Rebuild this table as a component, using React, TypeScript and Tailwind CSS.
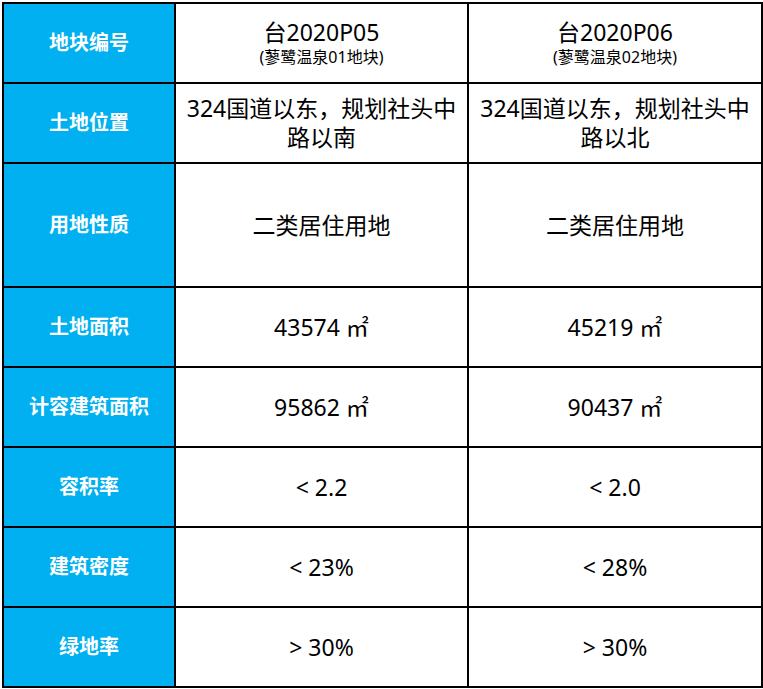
import React from 'react';

const rows: { label: string; a: React.ReactNode; b: React.ReactNode; h: string }[] = [
  { label: '土地位置', a: '324国道以东，规划社头中路以南', b: '324国道以东，规划社头中路以北', h: 'h-[80px]' },
  { label: '用地性质', a: '二类居住用地', b: '二类居住用地', h: 'h-[124px]' },
  { label: '土地面积', a: '43574 ㎡', b: '45219 ㎡', h: 'h-[80px]' },
  { label: '计容建筑面积', a: '95862 ㎡', b: '90437 ㎡', h: 'h-[80px]' },
  { label: '容积率', a: '< 2.2', b: '< 2.0', h: 'h-[80px]' },
  { label: '建筑密度', a: '< 23%', b: '< 28%', h: 'h-[80px]' },
  { label: '绿地率', a: '> 30%', b: '> 30%', h: 'h-[80px]' },
];

export default function App() {
  return (
    <div className="w-[763px] h-[689px] bg-white pl-[2px] pt-[2px] font-['Noto_Sans','Noto_Sans_CJK_SC',sans-serif] text-black">
      <table className="table-fixed border-collapse w-[759px]">
        <colgroup>
          <col className="w-[172px]" />
          <col className="w-[293px]" />
          <col className="w-[294px]" />
        </colgroup>
        <tbody>
          <tr className="h-[80px]">
            <td className="border-2 border-black bg-[#00b0f0] text-white font-bold text-[20px] text-center">地块编号</td>
            <td className="border-2 border-black text-center">
              <div className="text-[23px] leading-[28px]">台2020P05</div>
              <div className="text-[16px] leading-[22px]">(蓼鹭温泉01地块)</div>
            </td>
            <td className="border-2 border-black text-center">
              <div className="text-[23px] leading-[28px]">台2020P06</div>
              <div className="text-[16px] leading-[22px]">(蓼鹭温泉02地块)</div>
            </td>
          </tr>
          {rows.map((r) => (
            <tr key={r.label} className={r.h}>
              <td className="border-2 border-black bg-[#00b0f0] text-white font-bold text-[20px] text-center">{r.label}</td>
              <td className="border-2 border-black text-center text-[23px] leading-[29px] px-2">{r.a}</td>
              <td className="border-2 border-black text-center text-[23px] leading-[29px] px-2">{r.b}</td>
            </tr>
          ))}
        </tbody>
      </table>
    </div>
  );
}
